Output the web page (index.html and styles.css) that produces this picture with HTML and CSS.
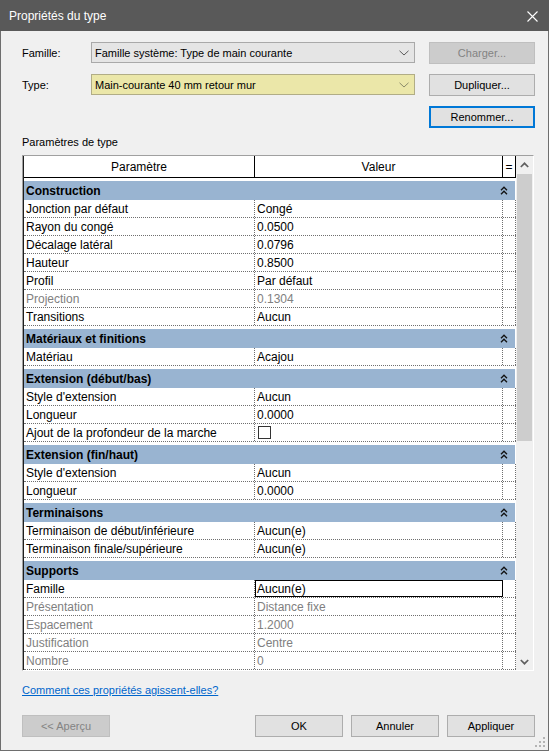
FILE: index.html
```html
<!DOCTYPE html>
<html lang="fr">
<head>
<meta charset="utf-8">
<title>Propriétés du type</title>
<link rel="stylesheet" href="styles.css">
</head>
<body>
<div class="window">
  <div class="titlebar">
    <span class="title">Propriétés du type</span>
    <svg class="close" width="11" height="11" viewBox="0 0 11 11"><path d="M0.5 0.5 L10.5 10.5 M10.5 0.5 L0.5 10.5" stroke="#fff" stroke-width="1.1" fill="none"/></svg>
  </div>
  <div class="body">
    <div class="field-row first">
      <span class="lbl">Famille:</span>
      <div class="combo"><span>Famille système: Type de main courante</span><svg class="dd" width="10" height="6" viewBox="0 0 10 6"><polyline points="0.5,0.8 5,5 9.5,0.8" stroke="#5a5a5a" stroke-width="1" fill="none"/></svg></div>
      <div class="btn disabled">Charger...</div>
    </div>
    <div class="field-row">
      <span class="lbl">Type:</span>
      <div class="combo yellow"><span>Main-courante 40 mm retour mur</span><svg class="dd" width="10" height="6" viewBox="0 0 10 6"><polyline points="0.5,0.8 5,5 9.5,0.8" stroke="#8a8a6a" stroke-width="1" fill="none"/></svg></div>
      <div class="btn">Dupliquer...</div>
    </div>
    <div class="field-row right">
      <div class="btn focused">Renommer...</div>
    </div>
    <div class="section-label">Paramètres de type</div>
    <div class="table">
      <div class="grid">
        <div class="hdr"><div class="c1">Paramètre</div><div class="c2">Valeur</div><div class="c3">=</div></div>

        <div class="group"><span>Construction</span><svg class="collapse" width="8" height="9" viewBox="0 0 8 9"><polyline points="1,4.2 4,1.2 7,4.2" stroke="#111" stroke-width="1.3" fill="none"/><polyline points="1,8.2 4,5.2 7,8.2" stroke="#111" stroke-width="1.3" fill="none"/></svg></div>
        <div class="row"><div class="c1">Jonction par défaut</div><div class="c2">Congé</div><div class="c3"></div></div>
        <div class="row"><div class="c1">Rayon du congé</div><div class="c2">0.0500</div><div class="c3"></div></div>
        <div class="row"><div class="c1">Décalage latéral</div><div class="c2">0.0796</div><div class="c3"></div></div>
        <div class="row"><div class="c1">Hauteur</div><div class="c2">0.8500</div><div class="c3"></div></div>
        <div class="row"><div class="c1">Profil</div><div class="c2">Par défaut</div><div class="c3"></div></div>
        <div class="row muted"><div class="c1">Projection</div><div class="c2">0.1304</div><div class="c3"></div></div>
        <div class="row"><div class="c1">Transitions</div><div class="c2">Aucun</div><div class="c3"></div></div>

        <div class="group"><span>Matériaux et finitions</span><svg class="collapse" width="8" height="9" viewBox="0 0 8 9"><polyline points="1,4.2 4,1.2 7,4.2" stroke="#111" stroke-width="1.3" fill="none"/><polyline points="1,8.2 4,5.2 7,8.2" stroke="#111" stroke-width="1.3" fill="none"/></svg></div>
        <div class="row"><div class="c1">Matériau</div><div class="c2">Acajou</div><div class="c3"></div></div>

        <div class="group"><span>Extension (début/bas)</span><svg class="collapse" width="8" height="9" viewBox="0 0 8 9"><polyline points="1,4.2 4,1.2 7,4.2" stroke="#111" stroke-width="1.3" fill="none"/><polyline points="1,8.2 4,5.2 7,8.2" stroke="#111" stroke-width="1.3" fill="none"/></svg></div>
        <div class="row"><div class="c1">Style d'extension</div><div class="c2">Aucun</div><div class="c3"></div></div>
        <div class="row"><div class="c1">Longueur</div><div class="c2">0.0000</div><div class="c3"></div></div>
        <div class="row"><div class="c1">Ajout de la profondeur de la marche</div><div class="c2"><span class="checkbox"></span></div><div class="c3"></div></div>

        <div class="group"><span>Extension (fin/haut)</span><svg class="collapse" width="8" height="9" viewBox="0 0 8 9"><polyline points="1,4.2 4,1.2 7,4.2" stroke="#111" stroke-width="1.3" fill="none"/><polyline points="1,8.2 4,5.2 7,8.2" stroke="#111" stroke-width="1.3" fill="none"/></svg></div>
        <div class="row"><div class="c1">Style d'extension</div><div class="c2">Aucun</div><div class="c3"></div></div>
        <div class="row"><div class="c1">Longueur</div><div class="c2">0.0000</div><div class="c3"></div></div>

        <div class="group"><span>Terminaisons</span><svg class="collapse" width="8" height="9" viewBox="0 0 8 9"><polyline points="1,4.2 4,1.2 7,4.2" stroke="#111" stroke-width="1.3" fill="none"/><polyline points="1,8.2 4,5.2 7,8.2" stroke="#111" stroke-width="1.3" fill="none"/></svg></div>
        <div class="row"><div class="c1">Terminaison de début/inférieure</div><div class="c2">Aucun(e)</div><div class="c3"></div></div>
        <div class="row"><div class="c1">Terminaison finale/supérieure</div><div class="c2">Aucun(e)</div><div class="c3"></div></div>

        <div class="group"><span>Supports</span><svg class="collapse" width="8" height="9" viewBox="0 0 8 9"><polyline points="1,4.2 4,1.2 7,4.2" stroke="#111" stroke-width="1.3" fill="none"/><polyline points="1,8.2 4,5.2 7,8.2" stroke="#111" stroke-width="1.3" fill="none"/></svg></div>
        <div class="row"><div class="c1">Famille</div><div class="c2 selected">Aucun(e)</div><div class="c3"></div></div>
        <div class="row muted"><div class="c1">Présentation</div><div class="c2">Distance fixe</div><div class="c3"></div></div>
        <div class="row muted"><div class="c1">Espacement</div><div class="c2">1.2000</div><div class="c3"></div></div>
        <div class="row muted"><div class="c1">Justification</div><div class="c2">Centre</div><div class="c3"></div></div>
        <div class="row muted"><div class="c1">Nombre</div><div class="c2">0</div><div class="c3"></div></div>
      </div>
      <div class="scrollbar">
        <div class="arrow"><svg width="9" height="6" viewBox="0 0 9 6"><polyline points="0.8,5 4.5,1.3 8.2,5" stroke="#606060" stroke-width="1.7" fill="none"/></svg></div>
        <div class="thumb"></div>
        <div class="track"></div>
        <div class="arrow"><svg width="9" height="6" viewBox="0 0 9 6"><polyline points="0.8,1 4.5,4.7 8.2,1" stroke="#606060" stroke-width="1.7" fill="none"/></svg></div>
      </div>
    </div>
    <a class="help" href="#">Comment ces propriétés agissent-elles?</a>
    <div class="bottom">
      <div class="btn small disabled preview">&lt;&lt; Aperçu</div>
      <div class="btn small ok">OK</div>
      <div class="btn small">Annuler</div>
      <div class="btn small">Appliquer</div>
    </div>
  </div>
  <svg class="grip" width="11" height="11" viewBox="0 0 11 11">
    <rect x="8" y="0" width="2" height="2" fill="#b4b4b4"/>
    <rect x="4" y="4" width="2" height="2" fill="#b4b4b4"/>
    <rect x="8" y="4" width="2" height="2" fill="#b4b4b4"/>
    <rect x="0" y="8" width="2" height="2" fill="#b4b4b4"/>
    <rect x="4" y="8" width="2" height="2" fill="#b4b4b4"/>
    <rect x="8" y="8" width="2" height="2" fill="#b4b4b4"/>
  </svg>
</div>
</body>
</html>
```

FILE: styles.css
```css
html, body {
  margin: 0;
  padding: 0;
}

body {
  width: 549px;
  height: 751px;
  overflow: hidden;
  background: #f0f0f0;
  font-family: "Liberation Sans", Arial, sans-serif;
  font-size: 12px;
  color: #000;
}

.window {
  position: relative;
  width: 549px;
  height: 751px;
  display: flex;
  flex-direction: column;
}

.titlebar {
  height: 31px;
  flex: none;
  background: #595959;
  display: flex;
  align-items: center;
}

.title {
  color: #fff;
  padding-left: 9px;
  padding-top: 1px;
  font-size: 12px;
}

.close {
  margin-left: auto;
  margin-right: 11px;
  margin-top: 1px;
}

.body {
  flex: 1;
  box-sizing: border-box;
  border: 1px solid #6e6e6e;
  border-top: none;
  padding: 0 13px 0 20px;
  display: flex;
  flex-direction: column;
  background: #f0f0f0;
  font-size: 11px;
}

.field-row {
  display: flex;
  align-items: center;
  height: 22px;
  margin-top: 10px;
}

.field-row.first {
  margin-top: 11px;
}

.field-row.right {
  justify-content: flex-end;
}

.lbl {
  width: 70px;
  flex: none;
  padding-left: 1px;
  box-sizing: border-box;
}

.combo {
  width: 324px;
  height: 21px;
  box-sizing: border-box;
  border: 1px solid #a9a9a9;
  background: #e5e5e5;
  display: flex;
  align-items: center;
  padding-left: 3px;
  margin-top: -1px;
}

.combo.yellow {
  background: #ebe7a9;
  border-color: #b1ad86;
}

.dd {
  margin-left: auto;
  margin-right: 5px;
}

.btn {
  margin-left: 14px;
  width: 106px;
  height: 22px;
  flex: none;
  box-sizing: border-box;
  border: 1px solid #adadad;
  background: #e1e1e1;
  display: flex;
  align-items: center;
  justify-content: center;
}

.btn.disabled {
  background: #cccccc;
  border-color: #bfbfbf;
  color: #838383;
}

.btn.focused {
  border: 2px solid #0078d7;
}

.section-label {
  margin-top: 7px;
  line-height: 14px;
  height: 14px;
  padding-left: 1px;
}

.table {
  margin-top: 6px;
  margin-left: 1px;
  width: 512px;
  height: 516px;
  box-sizing: border-box;
  border-top: 1px solid #a0a0a0;
  border-left: 1px solid #a0a0a0;
  border-right: 1px solid #ffffff;
  border-bottom: 1px solid #ffffff;
  display: flex;
  flex: none;
  font-size: 12px;
}

.grid {
  width: 493px;
  box-sizing: border-box;
  border-left: 1px solid #1e1e1e;
  background: #fff;
  display: flex;
  flex-direction: column;
  overflow: hidden;
}

.hdr {
  display: flex;
  height: 22px;
  box-sizing: border-box;
  border-bottom: 1px solid #000;
  flex: none;
}

.hdr > div {
  box-sizing: border-box;
  border-right: 1px solid #000;
  display: flex;
  align-items: center;
  justify-content: center;
  padding-top: 1px;
}

.c1 {
  width: 231px;
  flex: none;
}

.c2 {
  width: 248px;
  flex: none;
}

.c3 {
  width: 13px;
  flex: none;
}

.group {
  margin-top: 3px;
  height: 19px;
  flex: none;
  background: #99b4d1;
  font-weight: bold;
  display: flex;
  align-items: center;
  padding-left: 2px;
  padding-right: 7px;
  margin-right: 1px;
}

.group span {
  padding-top: 1px;
}

.collapse {
  margin-left: auto;
}

.row {
  display: flex;
  height: 18px;
  flex: none;
  box-sizing: border-box;
  border-bottom: 1px dotted #6f6f6f;
}

.row > div {
  box-sizing: border-box;
  display: flex;
  align-items: center;
  white-space: nowrap;
}

.row .c1,
.row .c2 {
  border-right: 1px dotted #6f6f6f;
  padding-left: 2px;
}

.row .c3 {
  border-right: 1px dotted #6f6f6f;
}

.row.muted {
  color: #808080;
}

.row .c2.selected {
  outline: 1px solid #000;
  outline-offset: -1px;
  border-right-color: transparent;
}

.checkbox {
  display: block;
  width: 13px;
  height: 13px;
  box-sizing: border-box;
  border: 1px solid #333;
  background: #fff;
  margin-left: 1px;
}

.scrollbar {
  width: 17px;
  flex: none;
  background: #f0f0f0;
  display: flex;
  flex-direction: column;
}

.arrow {
  height: 17px;
  flex: none;
  display: flex;
  align-items: center;
  justify-content: center;
}

.thumb {
  height: 267px;
  margin: 1px 1px 0 1px;
  background: #cdcdcd;
  flex: none;
}

.track {
  flex: 1;
}

.help {
  margin-top: 12px;
  margin-left: 1px;
  line-height: 14px;
  color: #0066cc;
  text-decoration: underline;
  align-self: flex-start;
}

.bottom {
  display: flex;
  margin-top: 18px;
  height: 22px;
}

.btn.small {
  width: 88px;
  margin-left: 8px;
}

.btn.small.preview {
  margin-left: 1px;
}

.btn.small.ok {
  margin-left: auto;
}

.grip {
  position: absolute;
  right: 3px;
  bottom: 3px;
}
```
